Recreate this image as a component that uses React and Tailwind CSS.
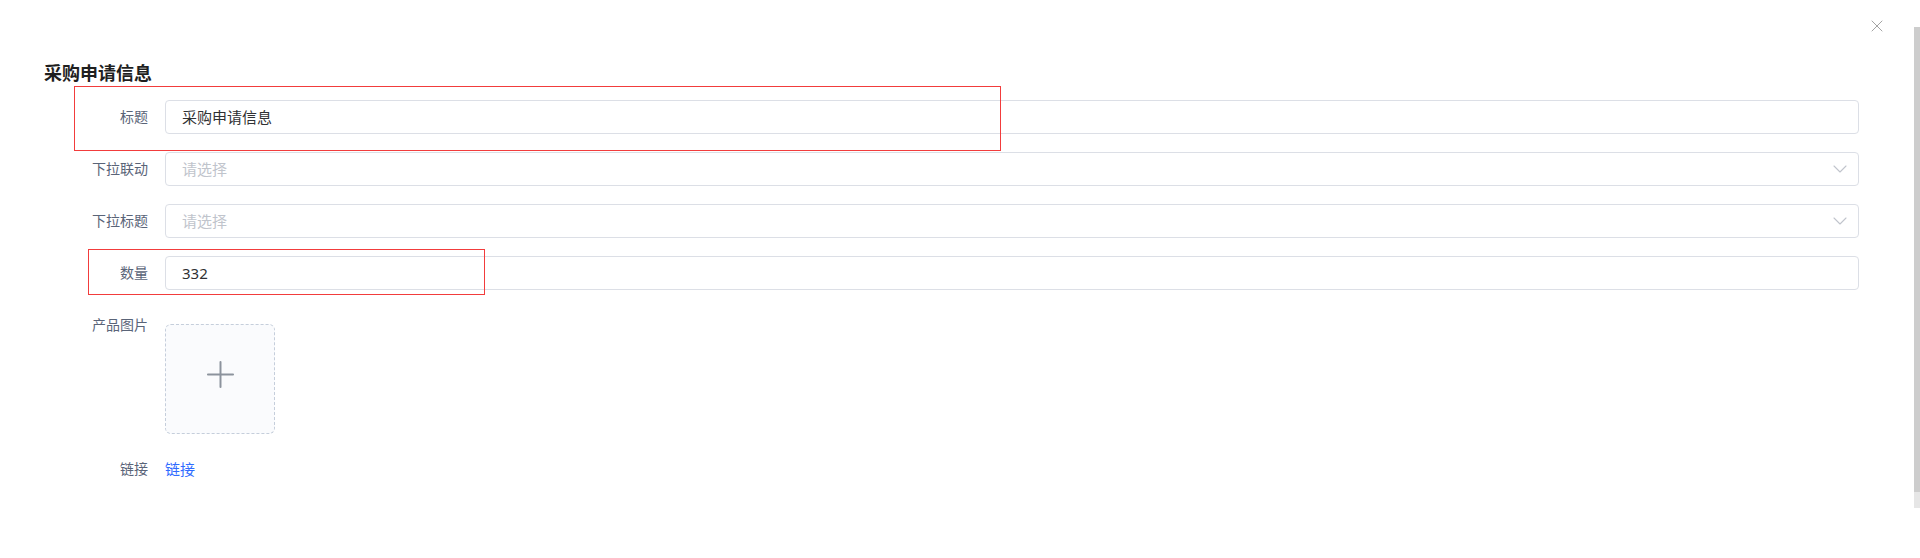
import { Plus, X, ChevronDown } from 'lucide-react';

const font = { fontFamily: '"Noto Sans", "Noto Sans CJK SC", sans-serif' };

function FormItem({ label, children, top = false }) {
  return (
    <div className={top ? 'flex items-start' : 'flex items-center'}>
      <div className="w-[121px] shrink-0 pr-[17px] text-right text-[14px] leading-[34px] text-[#5a6478]">{label}</div>
      <div className="min-w-0 flex-1">{children}</div>
    </div>
  );
}

function TextInput({ value, placeholder }) {
  return (
    <div className="flex h-[34px] items-center rounded-[4px] border border-[#dcdfe6] bg-white px-[16px] text-[15px]">
      {value ? (
        <span className="text-[#303133]">{value}</span>
      ) : (
        <span className="text-[#c0c4cc]">{placeholder}</span>
      )}
    </div>
  );
}

function Select({ placeholder }) {
  return (
    <div className="flex h-[34px] items-center justify-between rounded-[4px] border border-[#dcdfe6] bg-white pl-[16px] pr-[6px] text-[15px]">
      <span className="text-[#c0c4cc]">{placeholder}</span>
      <ChevronDown className="h-[24px] w-[24px] text-[#c0c4cc]" strokeWidth={1.1} />
    </div>
  );
}

export default function App() {
  return (
    <div className="flex h-[558px] w-[1920px] overflow-hidden bg-white" style={font}>
      <div className="relative flex-1 pl-[44px] pr-[55px] pt-[61px]">
        <button type="button" className="absolute right-[27px] top-[16px] text-[#9a9a9a]">
          <X className="h-[20px] w-[20px]" strokeWidth={1.1} />
        </button>

        <h2 className="mb-[15px] text-[18px] font-bold leading-[24px] text-[#1f1f1f]">采购申请信息</h2>

        <div className="flex flex-col gap-[18px]">
          <FormItem label="标题">
            <TextInput value="采购申请信息" />
          </FormItem>
          <FormItem label="下拉联动">
            <Select placeholder="请选择" />
          </FormItem>
          <FormItem label="下拉标题">
            <Select placeholder="请选择" />
          </FormItem>
          <FormItem label="数量">
            <TextInput value="332" />
          </FormItem>
          <FormItem label="产品图片" top>
            <div className="mt-[16px] flex h-[110px] w-[110px] items-center justify-center rounded-[6px] border border-dashed border-[#c5cedb] bg-[#fafbfd] pb-[10px]">
              <Plus className="h-[43px] w-[43px] text-[#8c939d]" strokeWidth={1.1} />
            </div>
          </FormItem>
          <FormItem label="链接">
            <a href="#" className="text-[15px] leading-[34px] text-[#2f6bff]">链接</a>
          </FormItem>
        </div>

        <div className="pointer-events-none absolute left-[74px] top-[86px] h-[65px] w-[927px] border border-[#f23c3c]" />
        <div className="pointer-events-none absolute left-[88px] top-[249px] h-[46px] w-[397px] border border-[#f23c3c]" />
      </div>

      <div className="w-[6px] shrink-0 pt-[27px]">
        <div className="h-[465px] bg-[#cdcdcd]" />
        <div className="h-[16px] bg-[#e6e6e6]" />
      </div>
    </div>
  );
}
